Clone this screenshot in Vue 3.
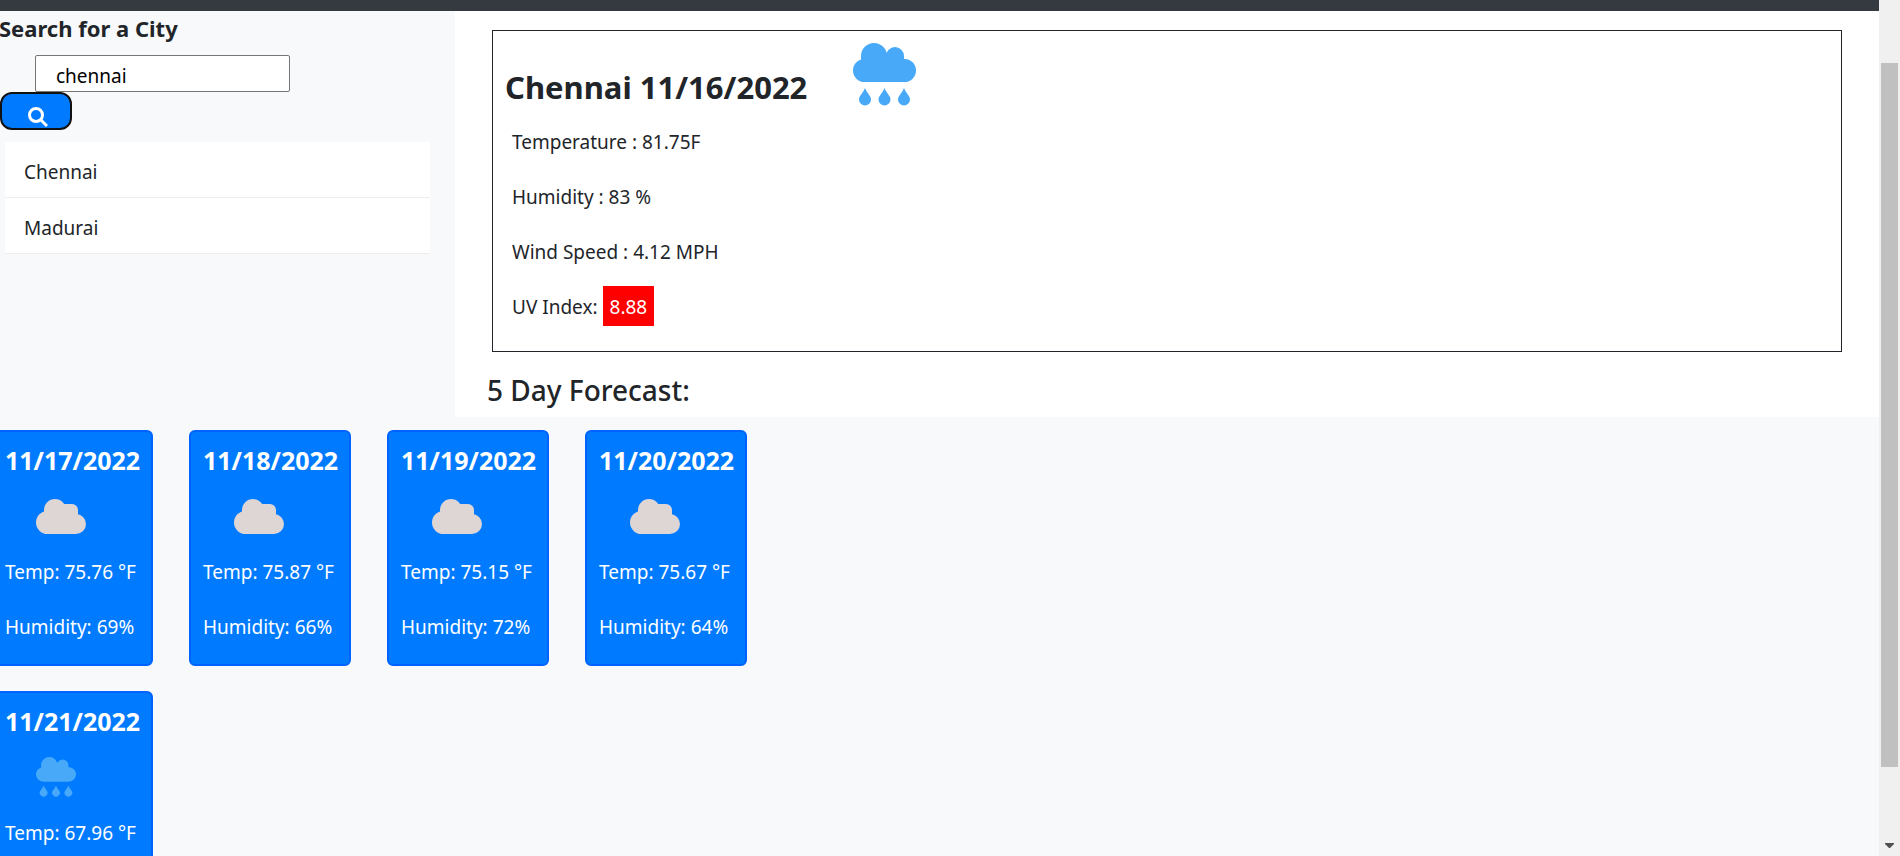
<script setup>
import { ref } from 'vue'

const query = ref('chennai')
const cities = ['Chennai', 'Madurai']
const days = [
  { date: '11/17/2022', icon: 'cloud', temp: '75.76', humidity: 69 },
  { date: '11/18/2022', icon: 'cloud', temp: '75.87', humidity: 66 },
  { date: '11/19/2022', icon: 'cloud', temp: '75.15', humidity: 72 },
  { date: '11/20/2022', icon: 'cloud', temp: '75.67', humidity: 64 },
  { date: '11/21/2022', icon: 'rain', temp: '67.96' }
]

const circle = (x, y, r) => `M${x - r} ${y} a${r} ${r} 0 1 1 ${2 * r} 0 a${r} ${r} 0 1 1 ${-2 * r} 0 Z`
const rainCloud =
  circle(21, 13, 13) + circle(42, 13, 9) + circle(11.5, 27.5, 11.5) + circle(51.5, 27.5, 11.5) +
  'M8 13 H51 V28 H8 Z M11.5 26 H51.5 V39 H11.5 Z'
const drops = [12, 31.5, 51]
  .map((x) => `M${x} 45 Q${x + 1} 48 ${x + 4.5} 52.5 A6 6 0 1 1 ${x - 4.5} 52.5 Q${x - 1} 48 ${x} 45 Z`)
  .join('')
const rain = rainCloud + drops
const cloud =
  circle(19, 11, 11) + circle(36, 11, 6) + circle(11.5, 23.5, 11.5) + circle(40, 25, 10) +
  'M8 11 H42 V26 H8 Z M28 5 H36 V12 H28 Z M11.5 23 H40 V35 H11.5 Z'
</script>

<template>
  <div class="window">
    <div class="page">
      <header class="topbar"></header>
      <div class="main">
        <aside class="sidebar">
          <h2><label for="city">Search for a City</label></h2>
          <form class="search" @submit.prevent>
            <input id="city" v-model="query" type="text" />
            <button type="submit" aria-label="Search">
              <svg width="20" height="20" viewBox="0 0 20 20">
                <circle cx="8" cy="8" r="6.5" />
                <path d="M12.5 12.5 L19 19" />
              </svg>
            </button>
          </form>
          <ul class="cities">
            <li v-for="c in cities" :key="c">{{ c }}</li>
          </ul>
        </aside>
        <main class="today">
          <section class="current">
            <div class="heading">
              <h1>Chennai 11/16/2022</h1>
              <svg class="rain" width="63" height="63" viewBox="0 0 63 63"><path :d="rain" /></svg>
            </div>
            <p>Temperature : 81.75F</p>
            <p>Humidity : 83 %</p>
            <p>Wind Speed : 4.12 MPH</p>
            <p>UV Index: <span class="uv">8.88</span></p>
          </section>
          <h3>5 Day Forecast:</h3>
        </main>
      </div>
      <section class="forecast">
        <article v-for="d in days" :key="d.date" class="card">
          <h4>{{ d.date }}</h4>
          <div class="icon">
            <svg v-if="d.icon === 'cloud'" class="cloud" width="50" height="35" viewBox="0 0 50 35"><path :d="cloud" /></svg>
            <svg v-else class="rain" width="40" height="40" viewBox="0 0 63 63"><path :d="rain" /></svg>
          </div>
          <p>Temp: {{ d.temp }} °F</p>
          <p v-if="d.humidity">Humidity: {{ d.humidity }}%</p>
        </article>
      </section>
    </div>
    <div class="scrollbar">
      <div class="thumb"></div>
      <svg width="9" height="5" viewBox="0 0 9 5"><path d="M0 0 H9 V1 L5 5 H4 L0 1 Z" /></svg>
    </div>
  </div>
</template>

<style>
body {
  overflow: hidden;
}
</style>

<style scoped>
.window {
  display: flex;
  height: 100vh;
  overflow: hidden;
  background: #f8f9fb;
  color: #212529;
  font-family: "Noto Sans", "Open Sans", sans-serif;
  font-size: 19px;
  line-height: 30px;
}
.page {
  flex: 1;
  min-width: 0;
}
h1, h2, h3, h4, p, ul {
  margin: 0;
  padding: 0;
}
.topbar {
  height: 11px;
  background: #343a40;
}
.main {
  display: flex;
}
.sidebar {
  flex: 0 0 455px;
}
h2 {
  margin: 3px 0 0 -1px;
  font-size: 22px;
  line-height: 28px;
}
.search {
  margin-top: 13px;
}
input {
  display: block;
  box-sizing: border-box;
  width: 255px;
  height: 37px;
  margin-left: 35px;
  padding: 4px 20px 0;
  border: 1px solid #767676;
  border-radius: 2px;
  background: #fff;
  color: #000;
  font: inherit;
}
button {
  display: flex;
  align-items: flex-end;
  justify-content: center;
  width: 72px;
  height: 38px;
  padding: 0 0 1px 4px;
  border: 2px solid #111;
  border-radius: 12px;
  background: #007bff;
}
button svg {
  fill: none;
  stroke: #fff;
  stroke-width: 3;
}
.cities {
  margin: 12px 25px 0 5px;
  list-style: none;
}
.cities li {
  padding: 15px 19px 10px;
  border-bottom: 1px solid #eee;
  background: #fff;
}
.today {
  flex: 1;
  padding: 19px 37px 7px;
  background: #fff;
}
.current {
  padding: 10px 12px 19px;
  border: 1px solid #212529;
}
.heading {
  display: flex;
  align-items: flex-start;
  gap: 46px;
  height: 71px;
}
h1 {
  padding-top: 26px;
  font-size: 31px;
  line-height: 40px;
}
.heading svg {
  margin-top: 2px;
}
.rain {
  fill: #48a9f8;
}
.cloud {
  fill: #ded5d5;
}
.current p {
  padding: 15px 7px 10px;
}
.uv {
  display: inline-block;
  margin: -6px 0 -4px;
  padding: 6px 7px 4px;
  background: #f00;
  color: #fff;
}
h3 {
  margin: 18px 0 0 -5px;
  font-size: 28px;
  font-weight: 500;
  line-height: 40px;
}
.forecast {
  display: flex;
  flex-wrap: wrap;
  gap: 25px 36px;
  max-width: 800px;
  margin: 13px 0 0 -9px;
}
.card {
  box-sizing: border-box;
  width: 162px;
  min-height: 236px;
  padding: 13px 12px 8px;
  border: 2px solid #0062ff;
  border-radius: 6px;
  background: #007bff;
  color: #fff;
}
h4 {
  font-size: 25px;
  line-height: 30px;
  white-space: nowrap;
}
.icon {
  display: flex;
  align-items: center;
  height: 82px;
  padding-left: 31px;
}
.icon svg {
  flex: none;
}
.card p + p {
  margin-top: 25px;
}
.card p {
  white-space: nowrap;
}
.scrollbar {
  display: flex;
  flex: 0 0 21px;
  flex-direction: column;
  align-items: center;
  box-sizing: border-box;
  padding: 63px 0 8px;
  background: #f0f0f0;
}
.thumb {
  flex: 1;
  width: 17px;
  margin-bottom: 76px;
  background: #c0c0c0;
}
.scrollbar svg {
  fill: #505050;
}
</style>
